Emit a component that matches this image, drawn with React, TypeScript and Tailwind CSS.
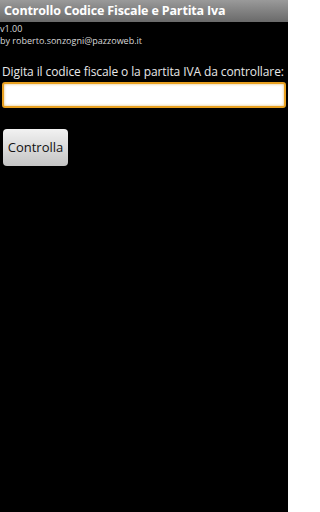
import React, { useState } from 'react';

export default function App() {
  const [code, setCode] = useState('');

  return (
    <div className="w-[288px] h-[512px] bg-black text-white overflow-hidden" style={{ fontFamily: '"Open Sans", "Noto Sans", sans-serif' }}>
      {/* Title bar */}
      <div className="h-[22px] bg-gradient-to-b from-[#9a9a9a] to-[#6a6a6a] flex items-center pl-[4px]">
        <h1 className="text-[12.5px] font-bold leading-none text-white tracking-[-0.15px]">Controllo Codice Fiscale e Partita Iva</h1>
      </div>

      <div className="pt-[1px]">
        <p className="text-[9px] leading-[12px] text-[#d8d8d8]">v1.00</p>
        <p className="text-[9px] leading-[12px] text-[#d8d8d8]">by roberto.sonzogni@pazzoweb.it</p>
      </div>

      <div className="px-[2px] pt-[17px]">
        <label className="block text-[12px] leading-[16px] text-[#e8e8e8] whitespace-nowrap tracking-[-0.1px]">Digita il codice fiscale o la partita IVA da controllare:</label>
        <input
          type="text"
          value={code}
          onChange={(e) => setCode(e.target.value)}
          className="mt-[2px] w-full h-[26px] bg-white rounded-[3px] border-2 border-[#e8a020] outline-none text-black text-[13px] px-2 shadow-[inset_0_0_3px_rgba(200,140,20,0.6)]"
        />
      </div>

      <div className="pl-[3px] pt-[21px]">
        <button className="w-[65px] h-[37px] rounded-[4px] bg-gradient-to-b from-[#f2f2f2] to-[#c4c4c4] text-[#111] text-[13px] flex items-center justify-center">
          Controlla
        </button>
      </div>
    </div>
  );
}
